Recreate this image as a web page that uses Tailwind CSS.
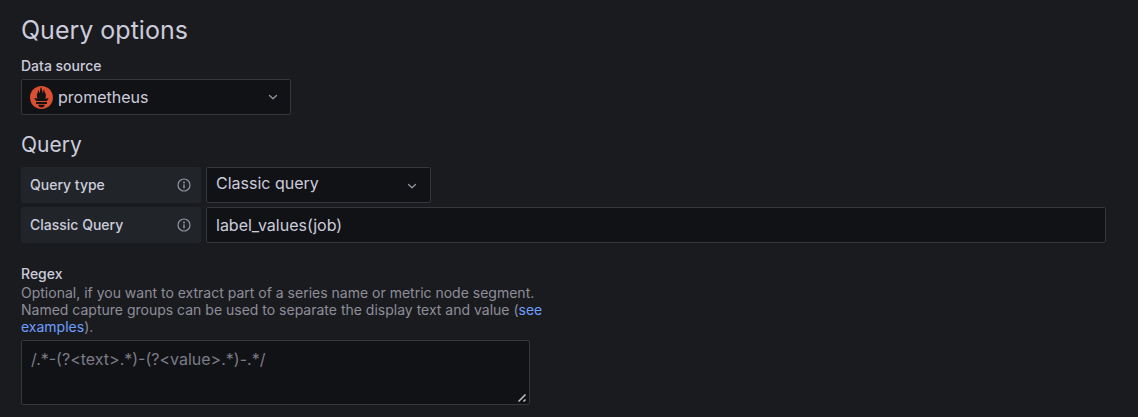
<!DOCTYPE html>
<html lang="en">
<head>
<meta charset="utf-8">
<meta name="viewport" content="width=device-width, initial-scale=1">
<title>Query options</title>
<script src="https://cdn.jsdelivr.net/npm/@tailwindcss/browser@4"></script>
</head>
<body class="min-h-screen bg-[#1a1b1f] font-['Inter','Liberation_Sans',sans-serif] text-[#ccccdc]">
<main class="pl-[21px] pr-8 pt-3 pb-3">
  <h1 class="text-[25px] leading-9">Query options</h1>

  <label for="source" class="mt-2 block text-sm leading-5 font-medium">Data source</label>
  <div class="mt-[3px] grid w-[270px] items-center">
    <select id="source" class="col-start-1 row-start-1 h-9 w-full appearance-none rounded-xs border border-[#36373c] bg-[#111216] pl-9 pr-8 text-base">
      <option>prometheus</option>
    </select>
    <svg class="pointer-events-none col-start-1 row-start-1 ml-[9px] size-[23px]" viewBox="0 0 24 24" fill="#da4e31" aria-hidden="true"><path d="M12 0C5.373 0 0 5.372 0 12c0 6.627 5.373 12 12 12s12-5.373 12-12c0-6.628-5.373-12-12-12zm0 22.46c-1.885 0-3.414-1.26-3.414-2.814h6.828c0 1.553-1.528 2.813-3.414 2.813zm5.64-3.745H6.36v-2.046h11.28v2.046zm-.04-3.098H6.391c-.037-.043-.075-.086-.111-.13-1.155-1.401-1.427-2.133-1.69-2.879-.005-.025 1.4.287 2.395.511 0 0 .513.119 1.262.255-.72-.843-1.147-1.915-1.147-3.01 0-2.406 1.845-4.508 1.18-6.207.648.053 1.34 1.367 1.387 3.422.689-.951.977-2.69.977-3.755 0-1.103.727-2.385 1.454-2.429-.648 1.069.168 1.984.893 4.256.272.854.237 2.29.447 3.201.07-1.892.395-4.652 1.595-5.605-.529 1.2.079 2.702.494 3.424.671 1.164 1.078 2.047 1.078 3.716a4.642 4.642 0 01-1.11 2.996c.792-.149 1.34-.283 1.34-.283l2.573-.502s-.374 1.538-1.81 3.019z"/></svg>
    <svg class="pointer-events-none col-start-1 row-start-1 mr-[10px] size-4 justify-self-end" viewBox="0 0 16 16" fill="none" stroke="#94949f" stroke-width="1.3" stroke-linecap="round" stroke-linejoin="round" aria-hidden="true"><path d="M4.5 6.500 8 9.800l3.500-3.300"/></svg>
  </div>

  <h2 class="mt-4 text-[21px] leading-7">Query</h2>
  <div class="mt-2 flex flex-col gap-1">
    <div class="flex gap-[5px]">
      <div class="flex h-9 w-[180px] shrink-0 items-center justify-between rounded-xs bg-[#212529] pl-[9px] pr-[10px]">
        <label for="type" class="text-sm font-medium">Query type</label>
        <button type="button" aria-label="About query type"><svg class="block size-[14px]" viewBox="0 0 14 14" fill="none" stroke="#94959d" stroke-width="1.2" stroke-linecap="round"><circle cx="7" cy="7" r="6"/><path d="M7 7v2.700" stroke-width="1.500"/><circle cx="7" cy="4.500" r=".4"/></svg></button>
      </div>
      <div class="grid w-[225px] items-center">
        <select id="type" class="col-start-1 row-start-1 h-9 w-full appearance-none rounded-xs border border-[#36373c] bg-[#111216] pb-1 pl-[9px] pr-8 text-base">
          <option>Classic query</option>
        </select>
        <svg class="pointer-events-none col-start-1 row-start-1 mr-[11px] size-4 justify-self-end" viewBox="0 0 16 16" fill="none" stroke="#94949f" stroke-width="1.3" stroke-linecap="round" stroke-linejoin="round" aria-hidden="true"><path d="M4.500 7.500 8 10.800l3.500-3.300"/></svg>
      </div>
    </div>
    <div class="flex gap-[5px]">
      <div class="flex h-9 w-[180px] shrink-0 items-center justify-between rounded-xs bg-[#212529] pl-[9px] pr-[10px]">
        <label for="query" class="text-sm font-medium">Classic Query</label>
        <button type="button" aria-label="About classic query"><svg class="block size-[14px]" viewBox="0 0 14 14" fill="none" stroke="#94959d" stroke-width="1.2" stroke-linecap="round"><circle cx="7" cy="7" r="6"/><path d="M7 7v2.700" stroke-width="1.500"/><circle cx="7" cy="4.500" r=".4"/></svg></button>
      </div>
      <input id="query" type="text" value="label_values(job)" class="h-9 min-w-0 grow rounded-xs border border-[#36373c] bg-[#111216] px-[9px] text-base">
    </div>
  </div>

  <label for="regex" class="mt-[21px] block text-sm leading-5 font-medium">Regex</label>
  <p class="max-w-[530px] text-sm leading-[17px] text-[#8e8e99]">Optional, if you want to extract part of a series name or metric node segment. Named capture groups can be used to separate the display text and value (<a href="#examples" class="text-[#6e9fff]">see examples</a>).</p>
  <div class="mt-[5px] grid w-fit max-w-full">
    <textarea id="regex" placeholder="/.*-(?&lt;text&gt;.*)-(?&lt;value&gt;.*)-.*/" class="col-start-1 row-start-1 block h-[65px] w-[509px] max-w-full resize rounded-xs border border-[#36373c] bg-[#111216] px-[9px] py-1.5 text-base scheme-dark placeholder:text-[#7b7c86]"></textarea>
    <svg class="pointer-events-none col-start-1 row-start-1 mr-0.5 mb-0.5 size-[10px] self-end justify-self-end bg-[#111216]" viewBox="0 0 10 10" fill="none" stroke="#c4c5c9" stroke-width="1.500" aria-hidden="true"><path d="M.5 8.500l7-7M5.500 8.500l2-2"/></svg>
  </div>
</main>
</body>
</html>
